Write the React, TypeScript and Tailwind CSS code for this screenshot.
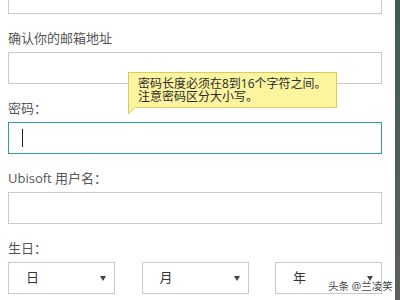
import type { ReactNode } from 'react'

const font = { fontFamily: '"Open Sans", "Noto Sans CJK SC", sans-serif' }

function Field({ label, children }: { label: string; children: ReactNode }) {
  return (
    <div className="flex flex-col">
      <div className="mt-[14px] mb-[4px] h-[20px] leading-[20px] text-[13px] text-[#555]">{label}</div>
      {children}
    </div>
  )
}

function Input({ active = false }: { active?: boolean }) {
  return (
    <div
      className={
        'h-[32px] w-[374px] bg-white border flex items-center ' +
        (active ? 'border-[#3592b0]' : 'border-[#c9c9c9]')
      }
    >
      {active && <div className="ml-[13px] h-[18px] w-px bg-[#222]" />}
    </div>
  )
}

function Select({ text }: { text: string }) {
  return (
    <div className="h-[32px] w-[107px] border border-[#c9c9c9] bg-white flex items-center justify-between pl-[17px] pr-[8px]">
      <span className="text-[13px] text-[#333]">{text}</span>
      <svg width="6" height="5" viewBox="0 0 6 5">
        <path d="M0 0 L6 0 L3 5 Z" fill="#444" />
      </svg>
    </div>
  )
}

export default function App() {
  return (
    <div className="relative flex h-[300px] w-[400px] overflow-hidden bg-white" style={font}>
      <div className="flex-1 pl-[8px]">
        <div className="-mt-[18px] h-[32px] w-[374px] border border-[#c9c9c9]" />
        <Field label="确认你的邮箱地址">
          <Input />
        </Field>
        <Field label="密码：">
          <Input active />
        </Field>
        <Field label="Ubisoft 用户名：">
          <Input />
        </Field>
        <Field label="生日：">
          <div className="flex w-[374px] justify-between">
            <Select text="日" />
            <Select text="月" />
            <Select text="年" />
          </div>
        </Field>
      </div>
      <div className="w-[5px] bg-gradient-to-b from-[#3f5c57] to-[#5a5f5d]" />

      {/* tooltip over the password field */}
      <div className="absolute left-[128px] top-[72px] h-[36px] w-[209px] border border-[#d9cb62] bg-[#fcf59f] pl-[9px] pt-[4px] text-[12px] leading-[13px] text-[#2a2a2a]">
        <div>密码长度必须在8到16个字符之间。</div>
        <div>注意密码区分大小写。</div>
      </div>
      <svg className="absolute left-[128px] top-[106px]" width="9" height="8" viewBox="0 0 9 8">
        <path d="M0.5 0 L0.5 7.5 L8 1" fill="#fcf59f" stroke="#d9cb62" />
        <rect x="1" y="0" width="7" height="1.5" fill="#fcf59f" />
      </svg>

      <div
        className="absolute left-[328px] top-[280px] text-[10.5px] leading-[12px] text-[#444]"
        style={{ textShadow: '0 0 2px #fff, 0 0 2px #fff' }}
      >
        头条 @兰凌笑
      </div>
    </div>
  )
}
